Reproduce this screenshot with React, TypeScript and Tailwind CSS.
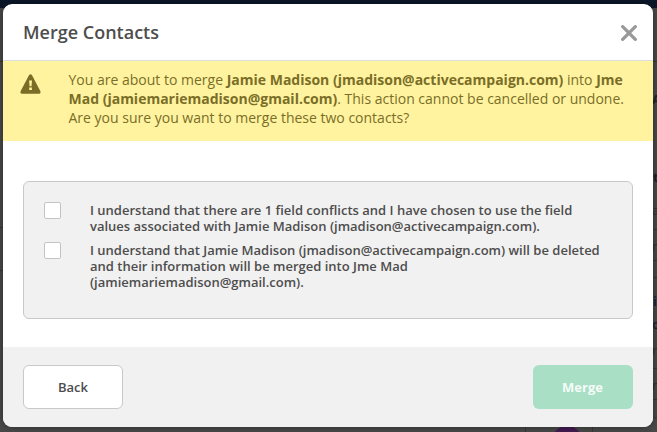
import { useState } from 'react'

const CONFLICT_TEXT = [
  'I understand that there are 1 field conflicts and I have chosen to use the field values associated with Jamie Madison (jmadison@activecampaign.com).',
  'I understand that Jamie Madison (jmadison@activecampaign.com) will be deleted and their information will be merged into Jme Mad (jamiemariemadison@gmail.com).',
]

// Dimmed page behind the modal, only its edges are visible
function Backdrop() {
  return (
    <div className="w-full h-full flex flex-col bg-[#484848] text-[#1d2026] text-[13px] leading-4">
      <div className="h-2 bg-[#0b1729]" />
      <div className="h-[53px]" />
      <div className="flex-1 flex border-t border-[#383838]">
        <div className="shrink-0 w-1 flex flex-col pt-[165px]">
          <div className="h-11 border-y border-[#383838]" />
        </div>
        <div className="shrink-0 self-end w-[68px] h-[6px] flex pl-[25px] overflow-hidden ml-[521px] border-x border-[#383838]">
          <div className="shrink-0 w-8 h-8 rounded-full bg-[#431b50]" />
        </div>
        <div className="shrink-0 w-[5px] ml-auto flex flex-col overflow-hidden">
          <span className="h-[78px] pt-[29px] font-bold">A</span>
          <span className="h-[61px] pt-[29px] pl-px font-bold">t</span>
          <span className="h-7 pt-px text-[#303030]">a</span>
          <span className="h-[31px] pt-2 border-t border-[#383838] text-[#303030]">n</span>
          <span className="h-[18px] border-y border-[#383838]" />
          <span className="h-[23px] pt-[15px] pl-px font-bold text-[#182638]">i</span>
          <span className="h-[26px] pt-[15px] font-semibold">o</span>
          <span className="h-[41px] pt-[15px] text-[#303030]">n</span>
          <span className="h-[31px] pt-2 border-t border-[#383838] text-[#303030]">n</span>
          <span className="h-[19px] border-y border-[#383838]" />
        </div>
      </div>
    </div>
  )
}

export default function App() {
  const [checked, setChecked] = useState([false, false])
  const toggle = (i: number) => setChecked(checked.map((c, n) => (n === i ? !c : c)))

  return (
    <div className="relative w-[657px] h-[432px] overflow-hidden font-['Open_Sans',sans-serif]">
      <Backdrop />
      <div className="absolute inset-x-[3px] top-1 w-[650px] h-[423px] flex flex-col bg-white rounded-[9px] overflow-hidden shadow-[0_0_6px_rgba(0,0,0,0.4)]">
        <header className="h-[57px] shrink-0 flex items-center justify-between pl-5 pr-4 border-b border-[#dcdfe0]">
          <h2 className="text-lg leading-6 font-semibold text-[#4d4d4d]">Merge Contacts</h2>
          <button title="Close" className="pt-0.5">
            <svg width="16" height="16" viewBox="0 0 16 16" fill="none" stroke="#999" strokeWidth="3.3" strokeLinecap="round">
              <path d="M1.7 1.7 14.3 14.3M14.3 1.7 1.7 14.3" />
            </svg>
          </button>
        </header>

        <div className="h-20 shrink-0 flex bg-[#fff3a0] text-[#7a6e27]">
          <svg className="ml-[17px] mt-[13px] shrink-0" width="21" height="20" viewBox="0 0 21 20">
            <path d="M9.1 1.1Q10.5-.7 11.9 1.1L20.3 17Q21 19.6 19 19.8H2Q0 19.6.7 17Z" fill="#7a6e27" />
            <path d="M9.1 6.5H12L11.5 12.2H9.6ZM9.2 13.5H11.9V16.1H9.2Z" fill="#fff3a0" />
          </svg>
          <p className="ml-[27.5px] mt-[9px] w-[562px] text-sm leading-[19px]">
            You are about to merge <strong>Jamie Madison (jmadison@activecampaign.com)</strong> into{' '}
            <strong>Jme Mad (jamiemariemadison@gmail.com)</strong>. This action cannot be cancelled or undone. Are you sure you want to merge these two contacts?
          </p>
        </div>

        <div className="flex-1 px-5 pt-10">
          <div className="h-[138px] pl-5 pt-5 flex flex-col gap-2 bg-[#f1f1f1] border border-[#c6c8c9] rounded-md">
            {CONFLICT_TEXT.map((text, i) => (
              <label key={i} className="flex items-start">
                <input type="checkbox" checked={checked[i]} onChange={() => toggle(i)}
                  className="appearance-none shrink-0 w-[17px] h-[17px] -mb-px bg-white border border-[#c4c4c4] rounded-xs checked:bg-[#a9dfc5]" />
                <span className="ml-[29px] w-[516px] text-[13px] leading-4 font-semibold text-[#4d4d4d]">{text}</span>
              </label>
            ))}
          </div>
        </div>

        <footer className="h-20 shrink-0 flex items-center justify-between px-5 bg-[#f1f1f1] text-[13px]">
          <button className="w-[100px] h-11 pt-0.5 bg-white border border-[#c6c8c9] rounded-md font-semibold text-[#4d4d4d]">Back</button>
          <button className="w-[100px] h-11 pt-0.5 pr-px bg-[#a9dfc5] rounded-md font-bold text-[#f6fcf9]">Merge</button>
        </footer>
      </div>
    </div>
  )
}
